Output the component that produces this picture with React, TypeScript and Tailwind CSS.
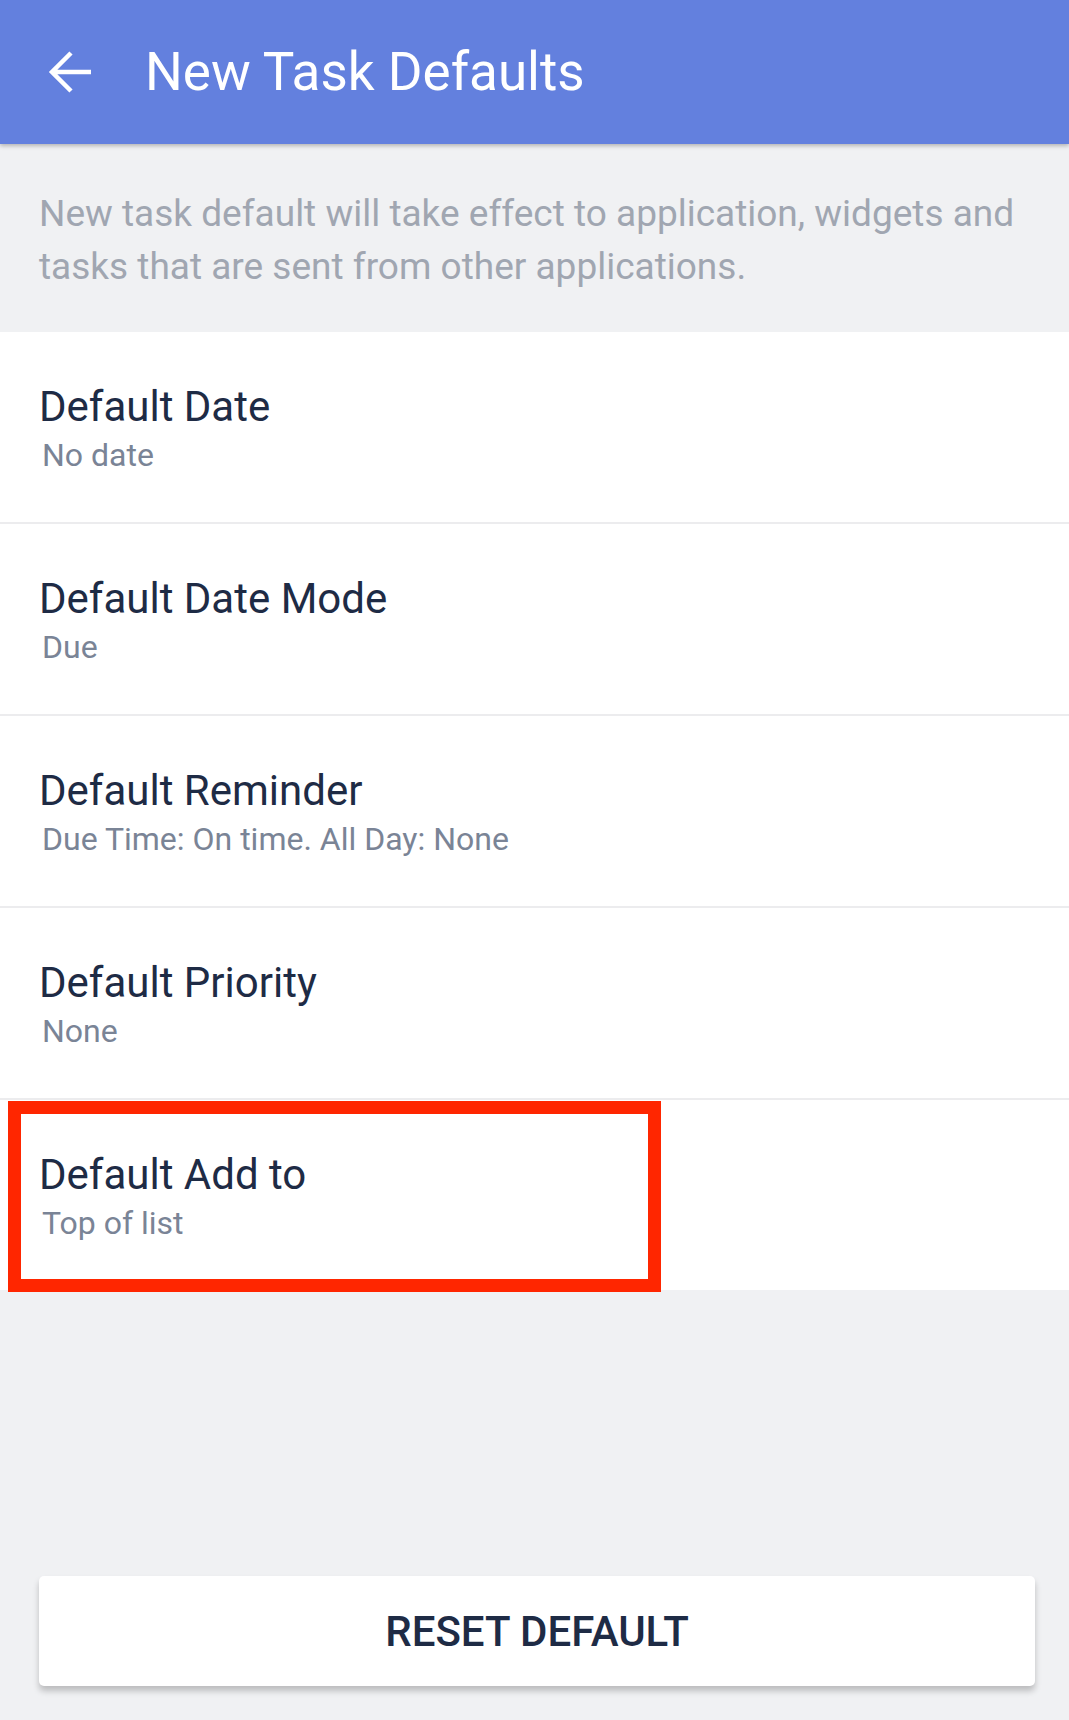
const rows = [
    { title: "Default Date", value: "No date" },
    { title: "Default Date Mode", value: "Due" },
    { title: "Default Reminder", value: "Due Time: On time. All Day: None" },
    { title: "Default Priority", value: "None" },
    { title: "Default Add to", value: "Top of list", marked: true },
]

const App = () => {
    return (
        <div className="flex min-h-[1720px] w-[1069px] flex-col bg-[#f0f1f3] font-['Roboto',sans-serif]">
            <header className="relative z-10 flex h-[144px] items-center bg-[#6380de] shadow-[0_2px_4px_rgba(0,0,0,0.25)]">
                <svg width="46" height="46" viewBox="0 0 46 46" className="ml-[47px]" fill="none">
                    <path d="M44 23H5 M24 4 L5 23 L24 42" stroke="white" strokeWidth="4.5" />
                </svg>
                <h1 className="ml-[52px] text-[53px] leading-none text-white">New Task Defaults</h1>
            </header>

            <p className="px-[39px] pt-[43px] pb-[39px] text-[37px] leading-[53px] text-[#a0a6b1]">
                New task default will take effect to application, widgets and tasks that are sent from other
                applications.
            </p>

            <div className="flex flex-col gap-[2px] bg-[#ececee]">
                {rows.map((row) => (
                    <div key={row.title} className="relative h-[190px] bg-white px-[39px] pt-[51px]">
                        <div className="text-[42px] leading-[48px] text-[#1e2b45]">{row.title}</div>
                        <div className="mt-[4px] pl-[3px] text-[32px] leading-[40px] text-[#7a8496]">{row.value}</div>
                        {row.marked && (
                            <div className="absolute top-[1px] left-[8px] h-[191px] w-[653px] border-[13px] border-[#ff2600]" />
                        )}
                    </div>
                ))}
            </div>

            <div className="flex-1" />

            <button className="mr-[34px] mb-[34px] ml-[39px] h-[110px] rounded-[5px] bg-white text-[42px] font-medium text-[#1e2b45] shadow-[0_5px_6px_rgba(0,0,0,0.22)]">
                RESET DEFAULT
            </button>
        </div>
    )
}

export default App
